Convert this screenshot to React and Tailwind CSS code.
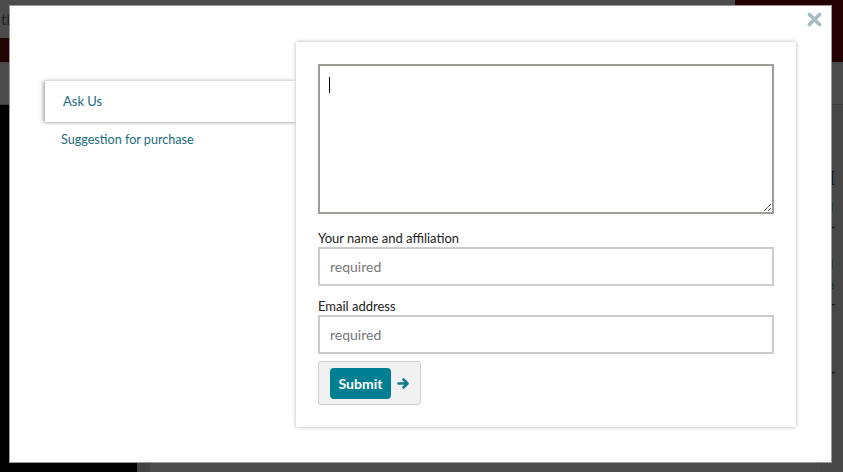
import React from "react";

const font = { fontFamily: "Lato, 'Open Sans', sans-serif" };

export default function App() {
  return (
    <div className="relative w-[843px] h-[472px] overflow-hidden bg-black" style={font}>
      {/* dimmed page behind the modal */}
      <div className="flex flex-col w-full h-full">
        <div className="flex h-[38px]">
          <div className="flex-1 bg-[#4b4b4b] text-[#222] text-[15px] leading-[38px] pl-[1px]">
            <span>th</span>
          </div>
          <div className="w-[108px] bg-[#230002]" />
        </div>
        <div className="h-[24px] bg-[#230002]" />
        <div className="h-[43px] bg-[#4b4b4b] border-b border-[#3d3d3d]" />
        <div className="flex flex-1">
          <div className="w-[137px] bg-black" />
          <div className="w-[13px] bg-[#444]" />
          <div className="flex-1 bg-[#4b4b4b]" />
          <div className="w-[23px] bg-[#474747] text-[13px] pt-[60px] leading-[20px] whitespace-nowrap overflow-hidden">
            <div className="text-[20px] font-serif font-bold text-[#111] leading-[28px] -ml-[4px]">GI</div>
            <div className="mt-[4px] text-[#0c2a33]">nil</div>
            <div className="font-bold text-[#111]">n -</div>
            <div className="mt-[17px] text-[#0c2a33]">nil</div>
            <div className="text-[#0c2a33]">ne</div>
            <div className="font-bold text-[#111]">n -</div>
            <div className="mt-[8px] text-[#0c2a33]">ol</div>
            <div className="text-[#0c2a33]">io</div>
            <div className="font-bold text-[#111]">n -</div>
          </div>
        </div>
      </div>

      {/* modal */}
      <div className="absolute left-[9px] top-[5px] w-[823px] h-[458px] bg-white border border-[#9a9a9a] flex pl-[35px] pt-[36px]">
        <button className="absolute right-[9px] top-[5px] w-[16px] h-[16px] flex items-center justify-center">
          <svg width="15" height="15" viewBox="0 0 15 15">
            <path d="M2.5 2.5 L12.5 12.5 M12.5 2.5 L2.5 12.5" stroke="#a7bdc4" strokeWidth="3.8" strokeLinecap="round" />
          </svg>
        </button>

        <div className="w-[251px] pt-[39px] flex flex-col">
          <div className="h-[41px] bg-white flex items-center pl-[18px] text-[13px] text-[#1b6b7e] shadow-[-2px_0_4px_rgba(0,0,0,0.3),0_1px_3px_rgba(0,0,0,0.15)] relative z-0">
            Ask Us
          </div>
          <div className="h-[36px] flex items-center pl-[16px] text-[12.6px] text-[#1b6b7e]">
            Suggestion for purchase
          </div>
        </div>

        <div className="w-[500px] h-[385px] bg-white shadow-[0_0_4px_rgba(0,0,0,0.3)] p-[22px] flex flex-col relative z-10">
          <div className="relative w-[456px] h-[150px]">
            <textarea className="w-full h-full border-2 border-[#a19e99] resize-y outline-none block" />
            <div className="absolute left-[11px] top-[13px] w-[1px] h-[16px] bg-black" />
          </div>
          <label className="mt-[16px] text-[13px] leading-[17px] text-[#222]">Your name and affiliation</label>
          <input
            className="w-[456px] h-[39px] border-2 border-[#cccccc] pl-[10px] text-[14px] outline-none placeholder:text-[#777]"
            placeholder="required"
          />
          <label className="mt-[11px] text-[13px] leading-[18px] text-[#222]">Email address</label>
          <input
            className="w-[456px] h-[39px] border-2 border-[#cccccc] pl-[10px] text-[14px] outline-none placeholder:text-[#777]"
            placeholder="required"
          />
          <div className="mt-[7px] w-[103px] h-[44px] bg-[#f1f1f1] border border-[#cfcfcf] rounded-[3px] flex items-center pl-[11px] gap-[6px]">
            <button className="w-[61px] h-[31px] bg-[#007e92] rounded-[4px] text-white font-bold text-[14px] leading-[29px]">
              Submit
            </button>
            <svg width="13" height="13" viewBox="0 0 13 13">
              <path d="M1.5 6.5 H10 M6.5 2.5 L10.5 6.5 L6.5 10.5" stroke="#0e7a8c" strokeWidth="2.6" fill="none" strokeLinecap="round" strokeLinejoin="round" />
            </svg>
          </div>
        </div>
      </div>
    </div>
  );
}
